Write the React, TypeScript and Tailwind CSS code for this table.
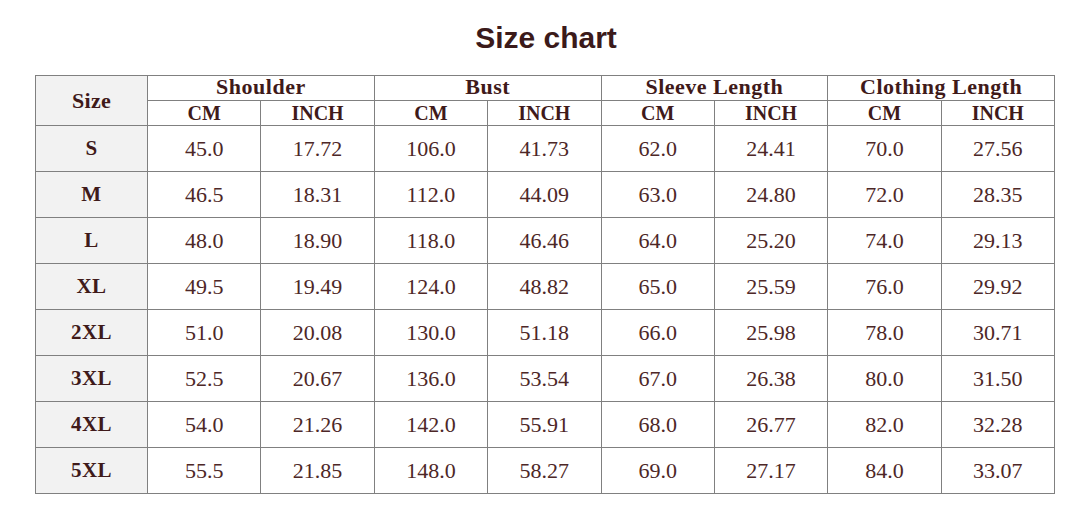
const groups = ['Shoulder', 'Bust', 'Sleeve Length', 'Clothing Length']

const rows: [string, string[]][] = [
  ['S', ['45.0', '17.72', '106.0', '41.73', '62.0', '24.41', '70.0', '27.56']],
  ['M', ['46.5', '18.31', '112.0', '44.09', '63.0', '24.80', '72.0', '28.35']],
  ['L', ['48.0', '18.90', '118.0', '46.46', '64.0', '25.20', '74.0', '29.13']],
  ['XL', ['49.5', '19.49', '124.0', '48.82', '65.0', '25.59', '76.0', '29.92']],
  ['2XL', ['51.0', '20.08', '130.0', '51.18', '66.0', '25.98', '78.0', '30.71']],
  ['3XL', ['52.5', '20.67', '136.0', '53.54', '67.0', '26.38', '80.0', '31.50']],
  ['4XL', ['54.0', '21.26', '142.0', '55.91', '68.0', '26.77', '82.0', '32.28']],
  ['5XL', ['55.5', '21.85', '148.0', '58.27', '69.0', '27.17', '84.0', '33.07']],
]

export default function App() {
  return (
    <div className="w-[1092px] h-[526px] bg-white">
      <h1 className="pt-[20px] text-center text-[30px] leading-[36px] font-bold text-[#3b1a1a] font-['Liberation_Sans',Arial,sans-serif]">
        Size chart
      </h1>

      <table className="mt-[19px] ml-[35px] w-[1020px] table-fixed border-collapse font-['Liberation_Serif','Times_New_Roman',serif] text-[#4d2727]">
        <colgroup>
          <col className="w-[112px]" />
          {Array.from({ length: 8 }).map((_, i) => (
            <col key={i} />
          ))}
        </colgroup>
        <thead>
          <tr className="h-[25px]">
            <th rowSpan={2} className="border border-[#808080] bg-[#f2f2f2] text-[22px] tracking-[0.3px] font-bold text-[#3f1a1a] leading-none">
              Size
            </th>
            {groups.map((g) => (
              <th key={g} colSpan={2} className="border border-[#808080] text-[22px] tracking-[0.5px] font-bold text-[#3f1a1a] leading-[20px] pb-[2px]">
                {g}
              </th>
            ))}
          </tr>
          <tr className="h-[25px]">
            {groups.map((g) => (
              <>
                <th key={g + 'cm'} className="border border-[#808080] text-[20px] font-bold text-[#3f1a1a] leading-none">CM</th>
                <th key={g + 'in'} className="border border-[#808080] text-[20px] font-bold text-[#3f1a1a] leading-none">INCH</th>
              </>
            ))}
          </tr>
        </thead>
        <tbody>
          {rows.map(([size, vals]) => (
            <tr key={size} className="h-[46px]">
              <td className="border border-[#808080] bg-[#f2f2f2] text-center text-[21px] tracking-[0.5px] font-bold text-[#3f1a1a]">
                {size}
              </td>
              {vals.map((v, i) => (
                <td key={i} className="border border-[#808080] text-center text-[22px] pb-[1px]">
                  {v}
                </td>
              ))}
            </tr>
          ))}
        </tbody>
      </table>
    </div>
  )
}
